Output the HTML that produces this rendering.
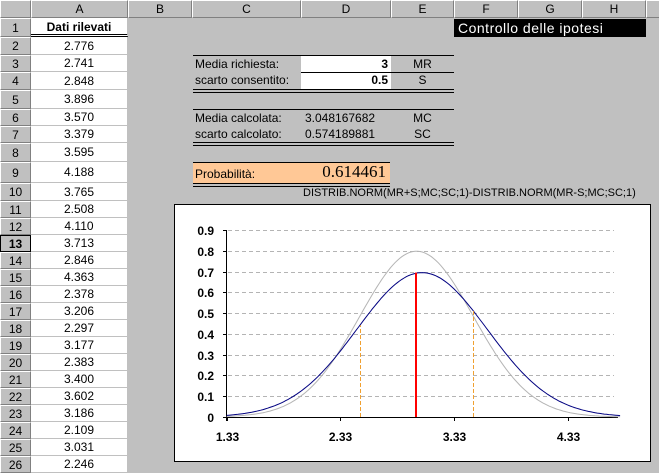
<!DOCTYPE html>
<html><head><meta charset="utf-8"><style>
body{margin:0;width:659px;height:467px;overflow:hidden;background:#c0c0c0;font-family:"Liberation Sans",sans-serif;font-size:12px;position:relative}
.a{position:absolute;box-sizing:border-box}
.hd{background:#c0c0c0;border-right:1px solid #808080;border-bottom:1px solid #808080;border-top:1px solid #fff;border-left:1px solid #fff;text-align:center;color:#000}
.cell{background:#fff;border-bottom:1px solid #c0c0c0;text-align:center}
.ln{position:absolute;height:1px;background:#000}
</style></head><body>
<div id="root"></div>
<div class="a" style="left:454px;top:19px;width:192px;height:18px;background:#000;color:#fff;font-size:14px;line-height:18px;padding-left:4px;letter-spacing:0.5px">Controllo delle ipotesi</div>

<div class="a" style="left:193px;top:55px;width:261px;height:1px;background:#000"></div>
<div class="a" style="left:301px;top:56px;width:90px;height:33px;background:#fff"></div>
<div class="a" style="left:301px;top:72px;width:153px;height:1px;background:#000"></div>
<div class="a" style="left:193px;top:89px;width:261px;height:1px;background:#000"></div>
<div class="a" style="left:193px;top:92px;width:261px;height:1px;background:#000"></div>
<div class="a" style="left:195px;top:57px;line-height:15px">Media richiesta:</div>
<div class="a" style="left:195px;top:73px;line-height:15px">scarto consentito:</div>
<div class="a" style="left:301px;top:57px;width:87px;text-align:right;font-weight:bold;line-height:15px">3</div>
<div class="a" style="left:301px;top:73px;width:87px;text-align:right;font-weight:bold;line-height:15px">0.5</div>
<div class="a" style="left:391px;top:57px;width:63px;text-align:center;line-height:15px">MR</div>
<div class="a" style="left:391px;top:73px;width:63px;text-align:center;line-height:15px">S</div>

<div class="a" style="left:193px;top:109px;width:261px;height:1px;background:#000"></div>
<div class="a" style="left:195px;top:110px;line-height:16px">Media calcolata:</div>
<div class="a" style="left:195px;top:126px;line-height:16px">scarto calcolato:</div>
<div class="a" style="left:305px;top:110px;line-height:16px">3.048167682</div>
<div class="a" style="left:305px;top:126px;line-height:16px">0.574189881</div>
<div class="a" style="left:391px;top:110px;width:63px;text-align:center;line-height:16px">MC</div>
<div class="a" style="left:391px;top:126px;width:63px;text-align:center;line-height:16px">SC</div>
<div class="a" style="left:193px;top:142px;width:261px;height:1px;background:#000"></div>
<div class="a" style="left:193px;top:145px;width:261px;height:1px;background:#000"></div>

<div class="a" style="left:193px;top:162px;width:197px;height:1px;background:#000"></div>
<div class="a" style="left:193px;top:163px;width:197px;height:20px;background:#ffc896"></div>
<div class="a" style="left:195px;top:166px;line-height:16px">Probabilità:</div>
<div class="a" style="left:300px;top:162px;width:86px;text-align:right;font-family:'Liberation Serif',serif;font-size:17px;line-height:20px">0.614461</div>
<div class="a" style="left:193px;top:183px;width:197px;height:1px;background:#000"></div>
<div class="a" style="left:193px;top:186px;width:197px;height:1px;background:#000"></div>
<div class="a" style="left:303px;top:186px;font-size:11px;line-height:14px">DISTRIB.NORM(MR+S;MC;SC;1)-DISTRIB.NORM(MR-S;MC;SC;1)</div>

<svg class="a" style="left:0;top:0" width="659" height="467" id="ch"></svg>
<script>
var root=document.getElementById('root'),h='';
var cols=[[31,128,'A'],[128,192,'B'],[192,301,'C'],[301,391,'D'],[391,454,'E'],[454,518,'F'],[518,582,'G'],[582,646,'H'],[646,700,'']];
h+='<div class="a hd" style="left:0;top:0;width:31px;height:18px"></div>';
cols.forEach(function(c){h+='<div class="a hd" style="left:'+c[0]+'px;top:0;width:'+(c[1]-c[0])+'px;height:18px;line-height:16px">'+c[2]+'</div>';});
var heights=[19,18,17,18,19,17,17,19,21,18];
var vals=['Dati rilevati','2.776','2.741','2.848','3.896','3.570','3.379','3.595','4.188','3.765','2.508','4.110','3.713','2.846','4.363','2.378','3.206','2.297','3.177','2.383','3.400','3.602','3.186','2.109','3.031','2.246'];
var y=18;
for(var i=0;i<26;i++){var hh=i<10?heights[i]:17;
 var b=(i==12)?'font-weight:bold;border:1px solid #000;':'';
 h+='<div class="a hd" style="left:0;top:'+y+'px;width:31px;height:'+hh+'px;line-height:'+(hh-1)+'px;'+b+'">'+(i+1)+'</div>';
 var st=i==0?'font-weight:bold;border-bottom:3px double #000;':'';
 h+='<div class="a cell" style="left:31px;top:'+y+'px;width:97px;height:'+hh+'px;line-height:'+(hh)+'px;border-right:1px solid #c0c0c0;'+st+'">'+vals[i]+'</div>';
 y+=hh;}
root.innerHTML=h;
var X=function(v){return 226.7+(v-1.33)*113.7},Y=function(p){return 417-p*207.8};
function pdf(x,m,s){return Math.exp(-0.5*((x-m)/s)*((x-m)/s))/(s*2.5066283)}
var s='<rect x="174.5" y="204.5" width="476" height="257" fill="#fff" stroke="#000"/>';
for(var k=1;k<=9;k++){var yy=Math.round(Y(k/10))+0.5;s+='<line x1="228" x2="614" y1="'+yy+'" y2="'+yy+'" stroke="#b4b4b4" stroke-dasharray="4,3"/>';}
for(var k=0;k<=9;k++){var yy=Math.round(Y(k/10));s+='<line x1="223" x2="227" y1="'+(yy+0.5)+'" y2="'+(yy+0.5)+'" stroke="#000"/><text x="214" y="'+(yy+5)+'" text-anchor="end" font-weight="bold" font-size="12" font-family="Liberation Sans">'+(k==0?'0':(k/10).toFixed(1))+'</text>';}
s+='<line x1="226.5" x2="226.5" y1="230" y2="421" stroke="#000"/><line x1="226" x2="618" y1="417.5" y2="417.5" stroke="#000"/>';
[1.33,2.33,3.33,4.33].forEach(function(v){var xx=Math.round(X(v))+0.5;s+='<line x1="'+xx+'" x2="'+xx+'" y1="417" y2="421" stroke="#000"/><text x="'+xx+'" y="441" text-anchor="middle" font-weight="bold" font-size="12" font-family="Liberation Sans">'+v.toFixed(2)+'</text>';});
function path(m,sd){var d='';for(var v=1.33;v<=4.79;v+=0.02){d+=(d?'L':'M')+X(v).toFixed(1)+','+Y(pdf(v,m,sd)).toFixed(1);}return d;}
s+='<path d="'+path(3,0.5)+'" fill="none" stroke="#b4b4b4"/>';
s+='<path d="'+path(3.048167682,0.574189881)+'" fill="none" stroke="#000080"/>';
[2.5,3.5].forEach(function(v){s+='<line x1="'+(Math.round(X(v))+0.5)+'" x2="'+(Math.round(X(v))+0.5)+'" y1="417" y2="'+Y(pdf(v,3.048,0.574))+'" stroke="#f0a030" stroke-dasharray="4,2"/>';});
s+='<line x1="416" x2="416" y1="417" y2="'+Y(0.695)+'" stroke="#ff0000" stroke-width="2"/>';
document.getElementById('ch').innerHTML=s;
</script>
</body></html>
